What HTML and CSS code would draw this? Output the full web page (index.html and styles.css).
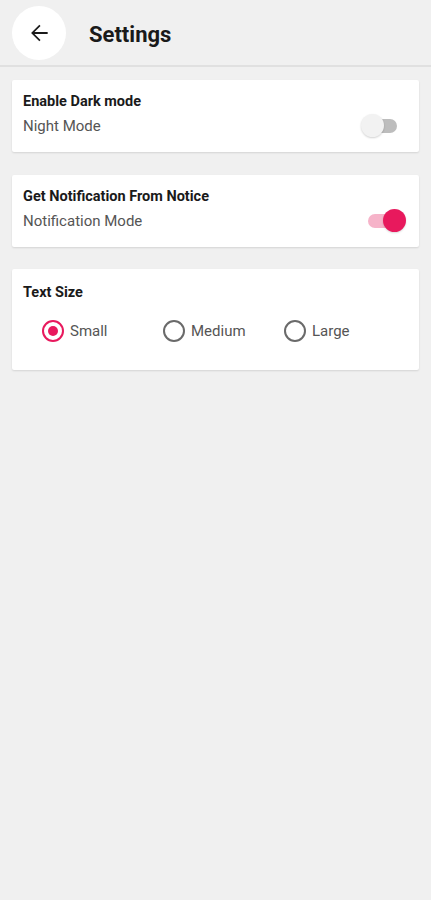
FILE: index.html
```html
<!DOCTYPE html>
<html lang="en">
<head>
<meta charset="utf-8">
<title>Settings</title>
<link rel="stylesheet" href="styles.css">
</head>
<body>
<header class="topbar">
  <button class="back-btn" aria-label="Back">
    <svg width="26" height="26" viewBox="0 0 24 24"><path d="M20 11.1H7.83l5.59-5.59L12.3 4.4 4.7 12l7.6 7.6 1.12-1.12L7.83 12.9H20z" fill="#1a1a1a"/></svg>
  </button>
  <h1 class="title">Settings</h1>
</header>
<main class="content">
  <section class="card row-card">
    <div class="texts">
      <div class="card-title">Enable Dark mode</div>
      <div class="card-sub">Night Mode</div>
    </div>
    <div class="switch"><span class="track"></span><span class="thumb"></span></div>
  </section>
  <section class="card row-card">
    <div class="texts">
      <div class="card-title">Get Notification From Notice</div>
      <div class="card-sub">Notification Mode</div>
    </div>
    <div class="switch on"><span class="track"></span><span class="thumb"></span></div>
  </section>
  <section class="card size-card">
    <div class="card-title">Text Size</div>
    <div class="radio-row">
      <div class="radio-item checked"><span class="radio"></span><span class="radio-label">Small</span></div>
      <div class="radio-item"><span class="radio"></span><span class="radio-label">Medium</span></div>
      <div class="radio-item"><span class="radio"></span><span class="radio-label">Large</span></div>
    </div>
  </section>
</main>
</body>
</html>
```
FILE: styles.css
```css
* { box-sizing: border-box; }
html, body { margin: 0; padding: 0; }
body {
  background: #f0f0f0;
  font-family: Roboto, "Liberation Sans", sans-serif;
  color: #1a1a1a;
  width: 431px;
  height: 900px;
  overflow: hidden;
}
.topbar {
  height: 67px;
  display: flex;
  align-items: center;
  padding-left: 12px;
  border-bottom: 2px solid #e0e0e0;
  background: #f0f0f0;
}
.back-btn {
  width: 54px;
  height: 54px;
  border-radius: 50%;
  background: #fff;
  border: none;
  padding: 0;
  display: flex;
  align-items: center;
  justify-content: center;
}
.title {
  margin: 3px 0 0 23px;
  font-size: 22px;
  font-weight: 700;
  color: #1a1a1a;
}
.content {
  padding: 13px 12px 0 12px;
  display: flex;
  flex-direction: column;
  gap: 23px;
}
.card {
  background: #fff;
  border-radius: 2px;
  box-shadow: 0 1px 2px rgba(0,0,0,0.12);
  padding: 12px 12px 14px 11px;
}
.row-card {
  display: flex;
  align-items: flex-end;
  justify-content: space-between;
  height: 72px;
}
.size-card {
  margin-top: -1px;
  padding-top: 14px;
  padding-bottom: 12px;
  height: 101px;
}
.card-title {
  font-size: 14.5px;
  font-weight: 700;
  line-height: 20px;
  color: #1a1a1a;
}
.card-sub {
  font-size: 15px;
  line-height: 24px;
  margin-top: 2px;
  color: #555;
}
.switch {
  position: relative;
  width: 46px;
  height: 24px;
}
.track {
  position: absolute;
  left: 7px;
  top: 5px;
  width: 29px;
  height: 14px;
  border-radius: 7px;
  background: #bdbdbd;
}
.thumb {
  position: absolute;
  left: 0;
  top: 0;
  width: 23px;
  height: 23px;
  border-radius: 50%;
  background: #f2f2f2;
  box-shadow: 0 1px 2px rgba(0,0,0,0.18);
}
.switch.on .track { background: #f6b3c9; }
.switch.on .thumb {
  left: 22px;
  background: #e8195d;
  box-shadow: 0 1px 2px rgba(0,0,0,0.15);
}
.radio-row {
  display: flex;
  padding-left: 19px;
  margin-top: 8px;
  height: 40px;
  align-items: center;
}
.radio-item {
  width: 121px;
  display: flex;
  align-items: center;
}
.radio {
  width: 22px;
  height: 22px;
  border-radius: 50%;
  border: 2px solid #6a6a6a;
  display: flex;
  align-items: center;
  justify-content: center;
  flex: none;
}
.radio-item.checked .radio { border-color: #e8195d; }
.radio-item.checked .radio::after {
  content: "";
  width: 10px;
  height: 10px;
  border-radius: 50%;
  background: #e8195d;
}
.radio-label {
  margin-left: 6px;
  font-size: 15px;
  color: #555;
}
```
